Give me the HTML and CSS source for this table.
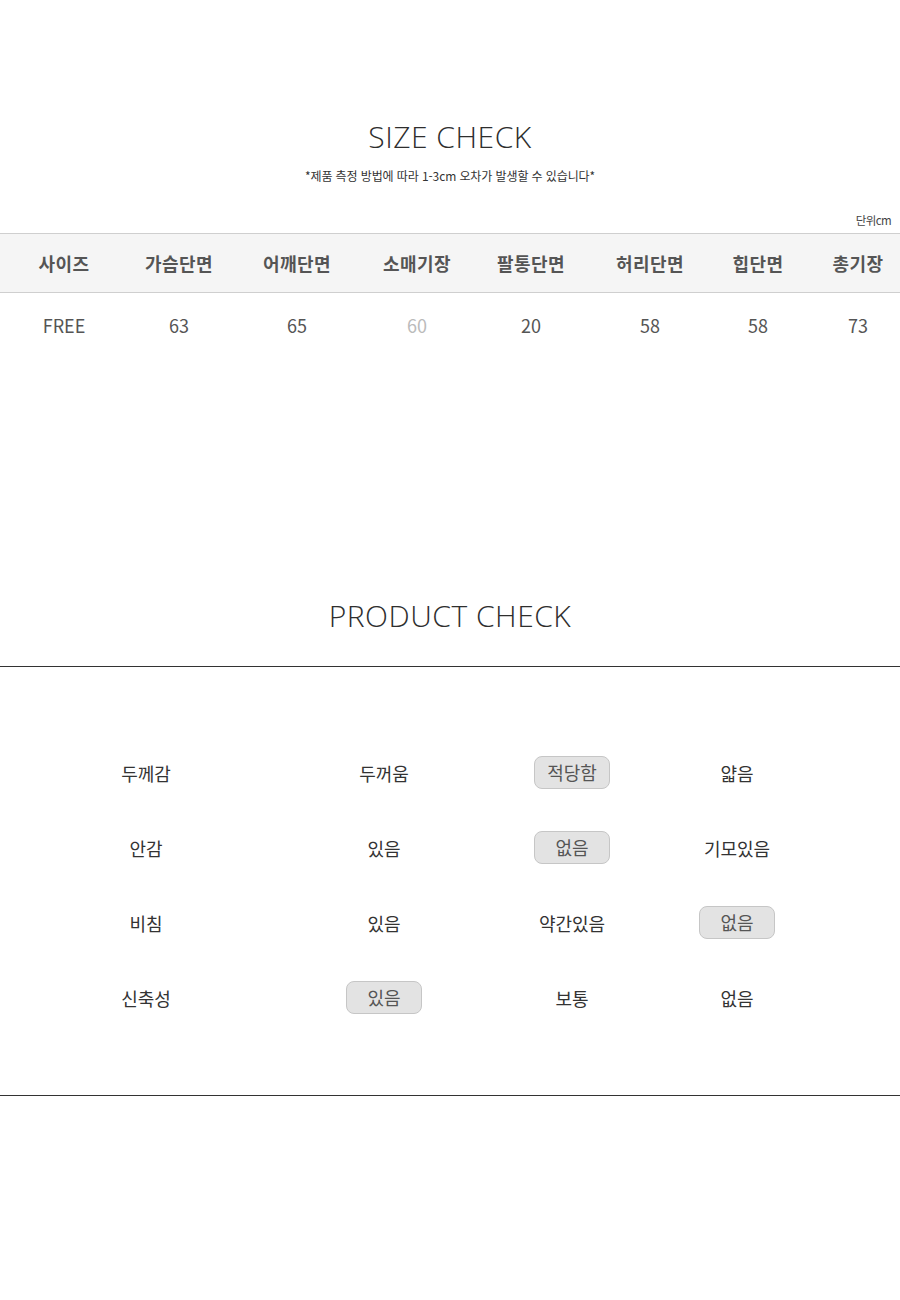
FILE: index.html
```html
<!DOCTYPE html>
<html lang="ko">
<head>
<meta charset="utf-8">
<title>SIZE CHECK</title>
<link rel="stylesheet" href="styles.css">
</head>
<body>
<section class="size">
  <h2 class="title">SIZE CHECK</h2>
  <p class="note">*제품 측정 방법에 따라 1-3cm 오차가 발생할 수 있습니다*</p>
  <p class="unit">단위cm</p>
  <div class="table">
    <div class="row head">
      <div>사이즈</div><div>가슴단면</div><div>어깨단면</div><div>소매기장</div><div>팔통단면</div><div>허리단면</div><div>힙단면</div><div>총기장</div>
    </div>
    <div class="row data">
      <div>FREE</div><div>63</div><div>65</div><div class="dim">60</div><div>20</div><div>58</div><div>58</div><div>73</div>
    </div>
  </div>
</section>
<section class="product">
  <h2 class="title">PRODUCT CHECK</h2>
  <div class="grid">
    <div>두께감</div><div>두꺼움</div><div><span class="badge">적당함</span></div><div>얇음</div>
    <div>안감</div><div>있음</div><div><span class="badge">없음</span></div><div>기모있음</div>
    <div>비침</div><div>있음</div><div>약간있음</div><div><span class="badge">없음</span></div>
    <div>신축성</div><div><span class="badge">있음</span></div><div>보통</div><div>없음</div>
  </div>
</section>
</body>
</html>
```
FILE: styles.css
```css
html, body {
  margin: 0;
  padding: 0;
  background: #fff;
}
body {
  width: 900px;
  font-family: "Noto Sans CJK KR", "Noto Sans", sans-serif;
  color: #333;
}
.title {
  margin: 0;
  font-family: "Open Sans", "Noto Sans", sans-serif;
  font-weight: 300;
  font-size: 30px;
  line-height: 36px;
  text-align: center;
  color: #2e2e2e;
  letter-spacing: 0.5px;
}
.size {
  padding-top: 119px;
}
.note {
  margin: 13px 0 0;
  font-size: 12px;
  line-height: 16px;
  text-align: center;
  letter-spacing: -0.1px;
  color: #333;
}
.unit {
  margin: 28px 0 0;
  padding-right: 9px;
  font-size: 11.5px;
  line-height: 16px;
  text-align: right;
  letter-spacing: -0.6px;
  color: #444;
}
.table {
  margin-top: 5px;
  overflow: hidden;
}
.row {
  display: grid;
  grid-template-columns: 128px 102px 134px 106px 122px 116px 100px 100px;
  align-items: center;
  text-align: center;
  font-size: 18px;
  color: #555;
}
.head {
  height: 60px;
  box-sizing: border-box;
  background: #f5f5f5;
  border-top: 1px solid #cfcfcf;
  border-bottom: 1px solid #cfcfcf;
  font-weight: 700;
  letter-spacing: 0.5px;
}
.data {
  height: 64px;
  color: #555;
}
.data .dim {
  color: #bbb;
}
.product {
  padding-top: 241px;
}
.grid {
  margin-top: 32px;
  border-top: 1px solid #333;
  border-bottom: 1px solid #333;
  padding: 68px 0 60px;
  display: grid;
  grid-template-columns: 292px 184px 192px 138px;
  grid-auto-rows: 75px;
  align-items: center;
  text-align: center;
  font-size: 18px;
  color: #333;
}
.badge {
  display: inline-block;
  width: 76px;
  height: 33px;
  box-sizing: border-box;
  border: 1px solid #c6c6c6;
  border-radius: 8px;
  background: #e3e3e3;
  color: #555;
  line-height: 31px;
}
```
